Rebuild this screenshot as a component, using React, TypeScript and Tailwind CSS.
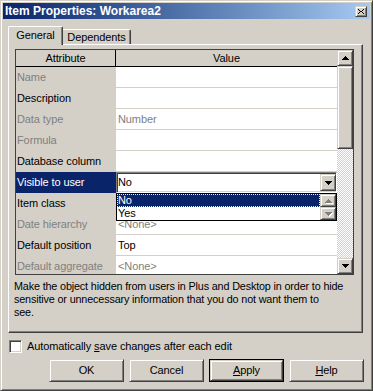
import type { ReactNode } from "react";
import clsx from "clsx";

const raised =
  "border border-t-[#d4d0c8] border-l-[#d4d0c8] border-r-[#404040] border-b-[#404040] shadow-[inset_1px_1px_#ffffff,inset_-1px_-1px_#808080]";
const sunken =
  "border border-t-[#808080] border-l-[#808080] border-r-[#ffffff] border-b-[#ffffff] shadow-[inset_1px_1px_#404040,inset_-1px_-1px_#d4d0c8]";

type Row = {
  label: string;
  value?: string;
  labelMuted?: boolean;
  valueMuted?: boolean;
  combo?: boolean;
};

const ROWS: Row[] = [
  { label: "Name", labelMuted: true },
  { label: "Description" },
  { label: "Data type", labelMuted: true, value: "Number", valueMuted: true },
  { label: "Formula", labelMuted: true },
  { label: "Database column" },
  { label: "Visible to user", value: "No", combo: true },
  { label: "Item class" },
  { label: "Date hierarchy", labelMuted: true, value: "<None>", valueMuted: true },
  { label: "Default position", value: "Top" },
  { label: "Default aggregate", labelMuted: true, value: "<None>", valueMuted: true },
];

export default function App() {
  return (
    <div className="h-[391px] w-[373px] overflow-hidden bg-[#d4d0c8] font-['Liberation_Sans',Arial,sans-serif] text-[11px] leading-[13px] tracking-[-0.1px] text-black">
      <div className="flex h-full flex-col border border-t-[#d4d0c8] border-l-[#d4d0c8] border-r-[#404040] border-b-[#404040] p-[2px] shadow-[inset_1px_1px_#ffffff,inset_-1px_-1px_#808080]">
        <div className="flex h-[16px] items-center justify-between bg-linear-to-r from-[#0a246a] to-[#a6caf0] pl-[2px] pr-[3px]">
          <span className="text-[12px] font-bold leading-[16px] tracking-normal text-white">Item Properties: Workarea2</span>
          <button className={clsx(raised, "flex h-[11px] w-[12px] items-center justify-center bg-[#d4d0c8]")}>
            <svg width="6" height="5" viewBox="0 0 6 5" shapeRendering="crispEdges">
              <path d="M0 0h1v1h-1zM1 1h1v1h-1zM2 2h2v1h-2zM4 1h1v1h-1zM5 0h1v1h-1zM1 3h1v1h-1zM0 4h1v1h-1zM4 3h1v1h-1zM5 4h1v1h-1z" fill="#000" />
            </svg>
          </button>
        </div>

        <div className="flex h-[25px] items-end pl-[5px]">
          <div className="relative z-10 -mb-px flex h-[19px] w-[55px] items-center justify-center rounded-t-[2px] border border-b-0 border-t-white border-l-white border-r-[#404040] pb-[2px] shadow-[inset_-1px_0_#808080] bg-[#d4d0c8]">
            General
          </div>
          <div className="flex h-[15px] w-[68px] items-center justify-center rounded-tr-[2px] border border-b-0 border-l-0 border-t-white border-r-[#404040] shadow-[inset_-1px_0_#808080]">
            Dependents
          </div>
        </div>

        <div className="ml-[5px] flex h-[289px] w-[355px] flex-col border border-t-white border-l-white border-r-[#404040] border-b-[#404040] pl-[6px] pt-[4px] shadow-[inset_-1px_-1px_#808080]">
          <PropertyGrid />
          <p className="ml-[-1px] mt-[5px] text-[10.8px] tracking-[-0.15px]">
            Make the object hidden from users in Plus and Desktop in order to hide
            <br />
            sensitive or unnecessary information that you do not want them to
            <br />
            see.
          </p>
        </div>

        <div className="ml-[6px] mt-[7px] flex h-[13px] items-center">
          <span className={clsx(sunken, "h-[13px] w-[13px] bg-white")} />
          <span className="ml-[5px]">
            Automatically <u>s</u>ave changes after each edit
          </span>
        </div>

        <div className="ml-[46px] mt-[6px] flex gap-[5px]">
          <DialogButton>OK</DialogButton>
          <DialogButton>Cancel</DialogButton>
          <DialogButton isDefault>
            <u>A</u>pply
          </DialogButton>
          <DialogButton>
            <u>H</u>elp
          </DialogButton>
        </div>
      </div>
    </div>
  );
}

function PropertyGrid() {
  return (
    <div className="flex h-[226px] w-[339px] border border-[#404040] bg-[#d4d0c8]">
      <div className="flex w-[321px] flex-col overflow-hidden">
        <div className="flex h-[17px] shrink-0 border-b border-black">
          <div className="flex w-[100px] items-center justify-center border-r border-black">Attribute</div>
          <div className="flex flex-1 items-center justify-center">Value</div>
        </div>
        {ROWS.map((row) => (
          <div key={row.label} className="flex h-[21px] shrink-0">
            <div
              className={clsx(
                "flex w-[100px] items-center pl-[1px]",
                row.combo ? "bg-[#0a246a] text-white" : row.labelMuted ? "text-[#808080]" : "text-black",
              )}
            >
              {row.label}
            </div>
            {row.combo ? (
              <div className="relative flex-1 bg-white">
                <div className={clsx(sunken, "flex h-[21px] items-center bg-white pl-[1px]")}>
                  <span className="flex-1">{row.value}</span>
                  <span className={clsx(raised, "flex h-[17px] w-[16px] items-center justify-center bg-[#d4d0c8]")}>
                    <Arrow dir="down" />
                  </span>
                </div>
                <DropdownList />
              </div>
            ) : (
              <div
                className={clsx(
                  "flex flex-1 items-center border-b border-[#d4d0c8] bg-white pl-[2px]",
                  row.valueMuted ? "text-[#808080]" : "text-black",
                )}
              >
                {row.value}
              </div>
            )}
          </div>
        ))}
      </div>
      <div className="flex w-[16px] flex-col">
        <ScrollButton>
          <Arrow dir="up" />
        </ScrollButton>
        <div className={clsx(raised, "h-[83px] bg-[#d4d0c8]")} />
        <div className="flex-1 bg-[repeating-conic-gradient(#d4d0c8_0_25%,#ffffff_0_50%)] bg-size-[2px_2px]" />
        <ScrollButton>
          <Arrow dir="down" />
        </ScrollButton>
      </div>
    </div>
  );
}

function DropdownList() {
  return (
    <div className="absolute left-0 top-[21px] z-20 flex h-[28px] w-[221px] border border-black bg-white">
      <div className="flex flex-1 flex-col">
        <div className="flex h-[13px] items-center bg-[#0a246a] pl-[1px] text-white outline-1 -outline-offset-1 outline-dotted outline-[#ffff80]">
          No
        </div>
        <div className="flex h-[13px] items-center pl-[1px]">Yes</div>
      </div>
      <div className="flex w-[16px] flex-col">
        <span className={clsx(raised, "flex h-[13px] items-center justify-center bg-[#d4d0c8]")}>
          <Arrow dir="up" muted />
        </span>
        <span className={clsx(raised, "flex h-[13px] items-center justify-center bg-[#d4d0c8]")}>
          <Arrow dir="down" muted />
        </span>
      </div>
    </div>
  );
}

function ScrollButton({ children }: { children: ReactNode }) {
  return (
    <div className={clsx(raised, "flex h-[16px] shrink-0 items-center justify-center bg-[#d4d0c8]")}>{children}</div>
  );
}

function Arrow({ dir, muted }: { dir: "up" | "down"; muted?: boolean }) {
  const widths = ["w-[1px]", "w-[3px]", "w-[5px]", "w-[7px]"];
  const rows = dir === "up" ? widths : [...widths].reverse();
  return (
    <span className="flex flex-col items-center">
      {rows.map((w, i) => (
        <span
          key={i}
          className={clsx("h-px", w, muted ? "bg-[#808080] shadow-[1px_1px_#ffffff]" : "bg-black")}
        />
      ))}
    </span>
  );
}

function DialogButton({ children, isDefault }: { children: ReactNode; isDefault?: boolean }) {
  const face = (
    <span className={clsx(raised, "flex h-full w-full items-center justify-center bg-[#d4d0c8]")}>{children}</span>
  );
  return isDefault ? (
    <button className="h-[23px] w-[75px] border border-black">{face}</button>
  ) : (
    <button className="h-[23px] w-[75px]">{face}</button>
  );
}
